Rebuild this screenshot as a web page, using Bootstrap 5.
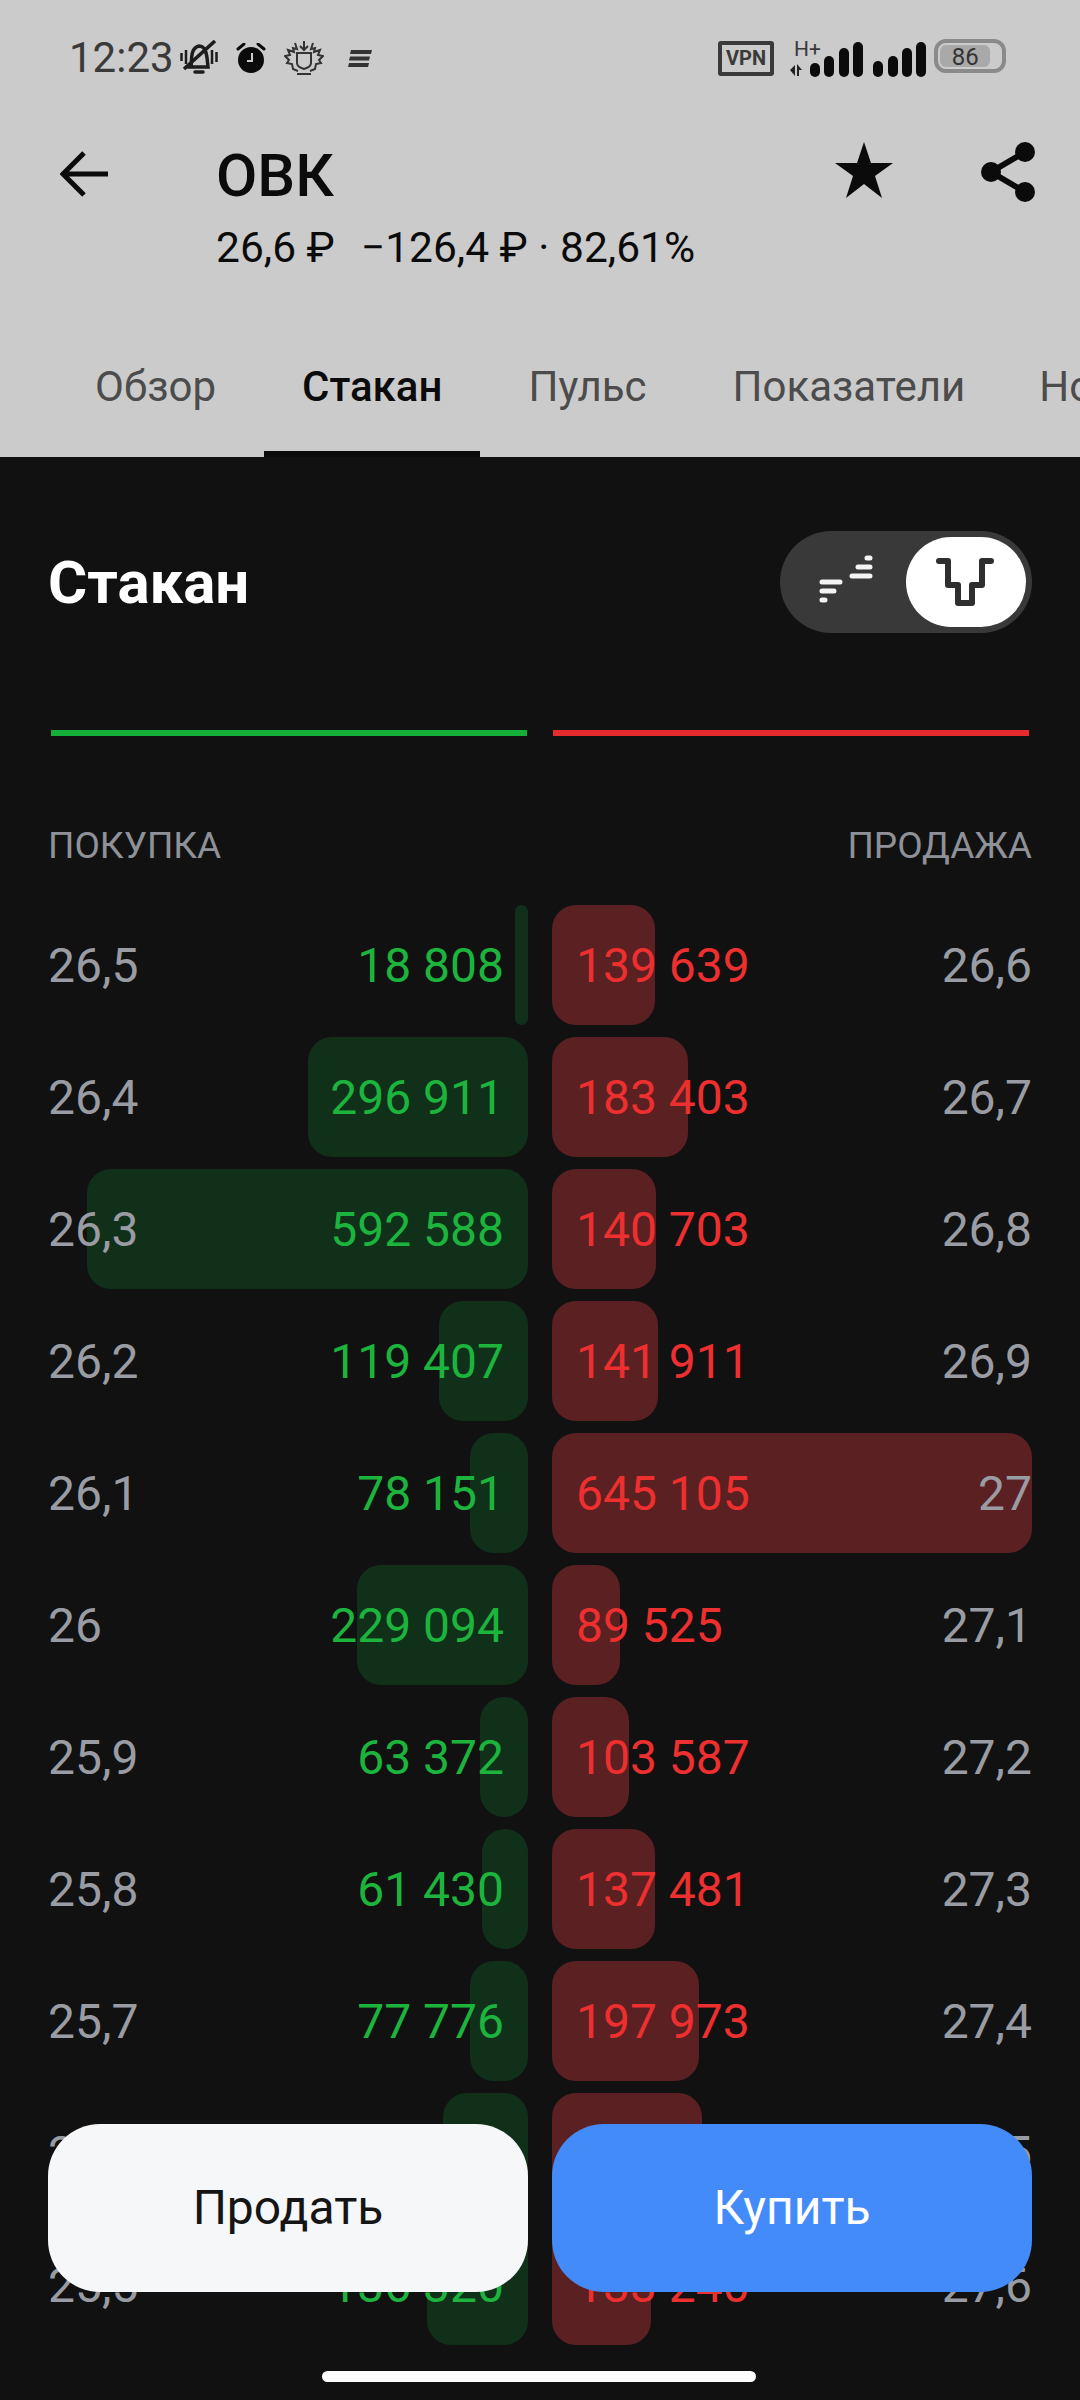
<!DOCTYPE html>
<html lang="ru">
<head>
    <meta charset="UTF-8">
    <title>ОВК - Стакан</title>
    <link href="https://cdn.jsdelivr.net/npm/bootstrap@5.3.0/dist/css/bootstrap.min.css" rel="stylesheet">
    <style>
        html, body {
            height: 2400px;
            overflow: hidden;
        }

        body {
            background-color: #111112;
            font-family: Roboto, "Liberation Sans", sans-serif;
        }

        .screen {
            height: 2400px;
            overflow: hidden;
        }

        .top-zone {
            height: 457px;
            background-color: #cbcbcb;
            color: #0b0b0b;
        }

        .status-row {
            height: 116px;
            padding: 0 74px 0 69px;
            color: #3a3a3a;
        }

        .clock {
            font-size: 42px;
            line-height: 48px;
            width: 111px;
        }

        .st-alarm { margin: 0 18px; }
        .st-crest { margin-right: 24px; }
        .st-signal { margin: 0 8px 0 16px; }

        .head-row {
            margin-top: 26px;
            padding: 0 45px 0 60px;
        }

        .title-box {
            margin-left: 109px;
        }

        .ticker {
            font-size: 60px;
            line-height: 66px;
            font-weight: 500;
            padding-top: 1px;
            margin-left: -1px;
        }

        .quote {
            font-size: 42.500px;
            line-height: 48px;
            margin-top: 15px;
            margin-left: -1px;
        }

        .quote-gap { margin-left: 5px; }

        .star-icon { margin: 0 88px 0 0; }

        .tab-row {
            flex-wrap: nowrap;
            padding-left: 57px;
            gap: 10px;
        }

        .tab-row .nav-link {
            height: 114px;
            padding: 20px 38px 0;
            font-size: 42px;
            line-height: 48px;
            color: #4c4c4c;
            white-space: nowrap;
        }

        .tab-row .nav-link.active {
            color: #0b0b0b;
            font-weight: 500;
            border-bottom: 6px solid #0b0b0b;
        }

        .tab-last { margin-left: -12px; }

        .book {
            padding: 74px 48px 0;
        }

        .book-title {
            font-size: 60px;
            line-height: 66px;
            font-weight: 700;
            color: #fff;
            padding-top: 2px;
        }

        .mode-track {
            width: 252px;
            height: 102px;
            padding: 6px;
            border-radius: 51px;
            background-color: #393939;
        }

        .mode-knob {
            width: 120px;
            height: 90px;
            border-radius: 45px;
            background-color: #fff;
        }

        .ratio-row {
            margin-top: 97px;
            gap: 26px;
            padding: 0 1px 0 3px;
        }

        .ratio-bid, .ratio-ask {
            height: 6px;
            width: 476px;
        }

        .ratio-bid { background-color: #14b03a; }
        .ratio-ask { background-color: #e52b2b; }

        .book-head {
            margin-top: 90px;
            margin-bottom: 39px;
            font-size: 37px;
            line-height: 40px;
            color: #8f9198;
        }

        .book-row {
            gap: 24px;
            margin-bottom: 12px;
        }

        .side {
            width: 480px;
            height: 120px;
            font-size: 48px;
            padding-top: 2px;
            color: #9a9ca3;
        }

        .side span {
            position: relative;
            z-index: 1;
        }

        .side-bid { padding-right: 24px; }
        .side-ask { padding-left: 24px; }

        .vol-bid { color: #1cb43c; }
        .vol-ask { color: #ed2f2f; }

        .depth {
            position: absolute;
            top: 0;
            bottom: 0;
            border-radius: 24px;
        }

        .side-bid .depth {
            right: 0;
            background-color: #11301a;
        }

        .side-ask .depth {
            left: 0;
            background-color: #5a2022;
        }

        .side-ask .price-ask {
            margin-left: auto;
        }

        .trade-bar {
            position: absolute;
            z-index: 2;
            left: 48px;
            right: 48px;
            top: 2124px;
            gap: 24px;
        }

        .trade-bar .btn {
            width: 480px;
            height: 168px;
            border: 0;
            border-radius: 52px;
            font-size: 48px;
        }

        .btn-sell {
            background-color: #f6f7f9;
            color: #151515;
        }

        .btn-buy {
            background-color: #448bfa;
            color: #fff;
        }

        .home-pill {
            position: absolute;
            z-index: 2;
            left: 322px;
            top: 2371px;
            width: 434px;
            height: 11px;
            border-radius: 6px;
            background-color: #fff;
        }

        .vpn-box {
            width: 56px;
            height: 35px;
            border: 4px solid #3a3a3a;
            border-radius: 3px;
            font-size: 20px;
            line-height: 26px;
            font-weight: 700;
            text-align: center;
            margin-left: auto;
        }

        .batt {
            width: 72px;
            height: 34px;
            border: 4px solid #8a8a8a;
            border-radius: 12px;
            padding: 2px;
            margin-top: -4px;
        }

        .batt-fill {
            height: 100%;
            border-radius: 6px;
            background-color: #a9a9a9;
            font-size: 24px;
            line-height: 24px;
            text-align: center;
            color: #333;
        }
    </style>
</head>
<body>
<div class="screen position-relative">

    <div class="top-zone d-flex flex-column">
        <div class="status-row d-flex align-items-center">
            <div class="clock">12:23</div>
            <svg width="38" height="36" viewBox="0 0 38 36" fill="none" stroke="#1c1c1c" stroke-width="3.500">
                <path d="M11 27 C12 20 10 8 19 6 C27 6 27 18 28 27 H8" stroke-linecap="round"/>
                <path d="M15 32 H23" stroke-linecap="round"/>
                <path d="M4 29 L35 1" stroke-width="3.600"/>
                <path d="M1.500 13 V21 M36.500 12 V22 M6 10 V24 M32 10 V24" stroke-width="2.500"/>
            </svg>
            <svg class="st-alarm" width="30" height="30" viewBox="0 0 30 30">
                <circle cx="15" cy="17" r="13" fill="#0b0b0b"/>
                <path d="M2 6 L8 1 M28 6 L22 1" stroke="#0b0b0b" stroke-width="3" stroke-linecap="round"/>
                <path d="M16 10 V18 H11" fill="none" stroke="#cbcbcb" stroke-width="2"/>
            </svg>
            <svg class="st-crest" width="40" height="34" viewBox="0 0 40 34" fill="none" stroke="#333" stroke-width="2">
                <path d="M13 12 H27 V22 C27 26 23 27 20 28 C17 27 13 26 13 22 Z"/>
                <path d="M20 0 V8 M16 5 L20 9 L24 5"/>
                <path d="M11 2 L13 8 L9 7 L10 11 L4 9 L6 14 L1 15 L5 19 L3 22 L8 23 L9 28 L14 30 M29 2 L27 8 L31 7 L30 11 L36 9 L34 14 L39 15 L35 19 L37 22 L32 23 L31 28 L26 30"/>
                <path d="M13 33 H27"/>
            </svg>
            <svg width="24" height="17" viewBox="0 0 24 17" fill="#333">
                <path d="M3 0 H24 L23 4 H2 Z M2 6.500 H22 L21 10.500 H1 Z M1 13 H21 L20 17 H0 Z"/>
            </svg>
            <div class="vpn-box">VPN</div>
            <svg class="st-signal" width="136" height="38" viewBox="0 0 136 38" overflow="visible">
                <text x="4" y="17" font-family="Roboto, sans-serif" font-size="21" fill="#3a3a3a">H+</text>
                <path d="M0 31 L5 26 V37 Z M7 25 L12 31 H9 V37 H7 Z" fill="#222"/>
                <g fill="#0b0b0b">
                    <rect x="20" y="24" width="10" height="14" rx="5"/>
                    <rect x="34" y="17" width="10" height="21" rx="5"/>
                    <rect x="49" y="9" width="10" height="29" rx="5"/>
                    <rect x="63" y="3" width="10" height="35" rx="5"/>
                    <rect x="83" y="22" width="10" height="16" rx="5"/>
                    <rect x="98" y="17" width="10" height="21" rx="5"/>
                    <rect x="112" y="9" width="10" height="29" rx="5"/>
                    <rect x="126" y="3" width="10" height="35" rx="5"/>
                </g>
            </svg>
            <div class="batt"><div class="batt-fill" style="width: 84%">86</div></div>
        </div>

        <div class="head-row d-flex align-items-start">
            <svg class="mt-2" width="48" height="48" viewBox="0 0 48 48" fill="none" stroke="#0b0b0b" stroke-width="5">
                <path d="M48 24 H4 M24 3 L3 24 L24 45"/>
            </svg>
            <div class="title-box flex-grow-1">
                <div class="ticker">ОВК</div>
                <div class="quote">26,6 ₽&nbsp; <span class="quote-gap">−126,4 ₽ · 82,61%</span></div>
            </div>
            <svg class="star-icon" width="58" height="56" viewBox="0 0 58 56" fill="#0b0b0b">
                <path d="M29 0 L36 21 H58 L40 34 L47 56 L29 42 L11 56 L18 34 L0 21 H22 Z"/>
            </svg>
            <svg width="54" height="60" viewBox="0 0 54 60" fill="#0b0b0b">
                <path d="M44 10 L10 30 L44 50" fill="none" stroke="#0b0b0b" stroke-width="6"/>
                <circle cx="44" cy="10" r="10"/>
                <circle cx="10" cy="30" r="10"/>
                <circle cx="44" cy="50" r="10"/>
            </svg>
        </div>

        <ul class="nav tab-row mt-auto">
            <li class="nav-item"><a class="nav-link" href="#">Обзор</a></li>
            <li class="nav-item"><a class="nav-link active" href="#">Стакан</a></li>
            <li class="nav-item"><a class="nav-link" href="#">Пульс</a></li>
            <li class="nav-item"><a class="nav-link" href="#">Показатели</a></li>
            <li class="nav-item tab-last"><a class="nav-link" href="#">Новости</a></li>
        </ul>
    </div>

    <div class="book">
        <div class="d-flex justify-content-between align-items-center">
            <div class="book-title">Стакан</div>
            <div class="mode-track d-flex align-items-center">
                <svg width="120" height="102" viewBox="46 21 120 102" fill="none" stroke="#f4f4f4" stroke-width="5" stroke-linecap="round">
                    <path d="M82 72 H100 M82 81 H94 M82 90 H85 M112 66 H130 M118 57 H130 M127 48 H130"/>
                </svg>
                <div class="mode-knob">
                    <svg width="120" height="90" viewBox="166 27 120 90" fill="none" stroke="#2f2f2f" stroke-width="6" stroke-linecap="round" stroke-linejoin="round">
                        <path d="M199 51 H208 V75 H218 V93 H232 V75 H242 V51 H251"/>
                    </svg>
                </div>
            </div>
        </div>

        <div class="ratio-row d-flex">
            <div class="ratio-bid"></div>
            <div class="ratio-ask"></div>
        </div>

        <div class="book-head d-flex justify-content-between">
            <div>ПОКУПКА</div>
            <div>ПРОДАЖА</div>
        </div>

        <div class="book-row d-flex">
            <div class="side side-bid position-relative d-flex align-items-center justify-content-between">
                <div class="depth" style="width: 13px"></div><span>26,5</span><span class="vol-bid">18 808</span>
            </div>
            <div class="side side-ask position-relative d-flex align-items-center">
                <div class="depth" style="width: 103px"></div><span class="vol-ask">139 639</span><span class="price-ask">26,6</span>
            </div>
        </div>
        <div class="book-row d-flex">
            <div class="side side-bid position-relative d-flex align-items-center justify-content-between">
                <div class="depth" style="width: 220px"></div><span>26,4</span><span class="vol-bid">296 911</span>
            </div>
            <div class="side side-ask position-relative d-flex align-items-center">
                <div class="depth" style="width: 136px"></div><span class="vol-ask">183 403</span><span class="price-ask">26,7</span>
            </div>
        </div>
        <div class="book-row d-flex">
            <div class="side side-bid position-relative d-flex align-items-center justify-content-between">
                <div class="depth" style="width: 441px"></div><span>26,3</span><span class="vol-bid">592 588</span>
            </div>
            <div class="side side-ask position-relative d-flex align-items-center">
                <div class="depth" style="width: 104px"></div><span class="vol-ask">140 703</span><span class="price-ask">26,8</span>
            </div>
        </div>
        <div class="book-row d-flex">
            <div class="side side-bid position-relative d-flex align-items-center justify-content-between">
                <div class="depth" style="width: 89px"></div><span>26,2</span><span class="vol-bid">119 407</span>
            </div>
            <div class="side side-ask position-relative d-flex align-items-center">
                <div class="depth" style="width: 106px"></div><span class="vol-ask">141 911</span><span class="price-ask">26,9</span>
            </div>
        </div>
        <div class="book-row d-flex">
            <div class="side side-bid position-relative d-flex align-items-center justify-content-between">
                <div class="depth" style="width: 58px"></div><span>26,1</span><span class="vol-bid">78 151</span>
            </div>
            <div class="side side-ask position-relative d-flex align-items-center">
                <div class="depth" style="width: 480px"></div><span class="vol-ask">645 105</span><span class="price-ask">27</span>
            </div>
        </div>
        <div class="book-row d-flex">
            <div class="side side-bid position-relative d-flex align-items-center justify-content-between">
                <div class="depth" style="width: 171px"></div><span>26</span><span class="vol-bid">229 094</span>
            </div>
            <div class="side side-ask position-relative d-flex align-items-center">
                <div class="depth" style="width: 68px"></div><span class="vol-ask">89 525</span><span class="price-ask">27,1</span>
            </div>
        </div>
        <div class="book-row d-flex">
            <div class="side side-bid position-relative d-flex align-items-center justify-content-between">
                <div class="depth" style="width: 48px"></div><span>25,9</span><span class="vol-bid">63 372</span>
            </div>
            <div class="side side-ask position-relative d-flex align-items-center">
                <div class="depth" style="width: 77px"></div><span class="vol-ask">103 587</span><span class="price-ask">27,2</span>
            </div>
        </div>
        <div class="book-row d-flex">
            <div class="side side-bid position-relative d-flex align-items-center justify-content-between">
                <div class="depth" style="width: 46px"></div><span>25,8</span><span class="vol-bid">61 430</span>
            </div>
            <div class="side side-ask position-relative d-flex align-items-center">
                <div class="depth" style="width: 103px"></div><span class="vol-ask">137 481</span><span class="price-ask">27,3</span>
            </div>
        </div>
        <div class="book-row d-flex">
            <div class="side side-bid position-relative d-flex align-items-center justify-content-between">
                <div class="depth" style="width: 58px"></div><span>25,7</span><span class="vol-bid">77 776</span>
            </div>
            <div class="side side-ask position-relative d-flex align-items-center">
                <div class="depth" style="width: 147px"></div><span class="vol-ask">197 973</span><span class="price-ask">27,4</span>
            </div>
        </div>
        <div class="book-row d-flex">
            <div class="side side-bid position-relative d-flex align-items-center justify-content-between">
                <div class="depth" style="width: 85px"></div><span>25,6</span><span class="vol-bid">103 240</span>
            </div>
            <div class="side side-ask position-relative d-flex align-items-center">
                <div class="depth" style="width: 150px"></div><span class="vol-ask">201 118</span><span class="price-ask">27,5</span>
            </div>
        </div>
        <div class="book-row d-flex">
            <div class="side side-bid position-relative d-flex align-items-center justify-content-between">
                <div class="depth" style="width: 101px"></div><span>25,5</span><span class="vol-bid">136 320</span>
            </div>
            <div class="side side-ask position-relative d-flex align-items-center">
                <div class="depth" style="width: 99px"></div><span class="vol-ask">133 240</span><span class="price-ask">27,6</span>
            </div>
        </div>
    </div>

    <div class="trade-bar d-flex">
        <button type="button" class="btn btn-sell">Продать</button>
        <button type="button" class="btn btn-buy">Купить</button>
    </div>
    <div class="home-pill"></div>
</div>
<script src="https://cdn.jsdelivr.net/npm/bootstrap@5.3.0/dist/js/bootstrap.bundle.min.js"></script>
</body>
</html>
